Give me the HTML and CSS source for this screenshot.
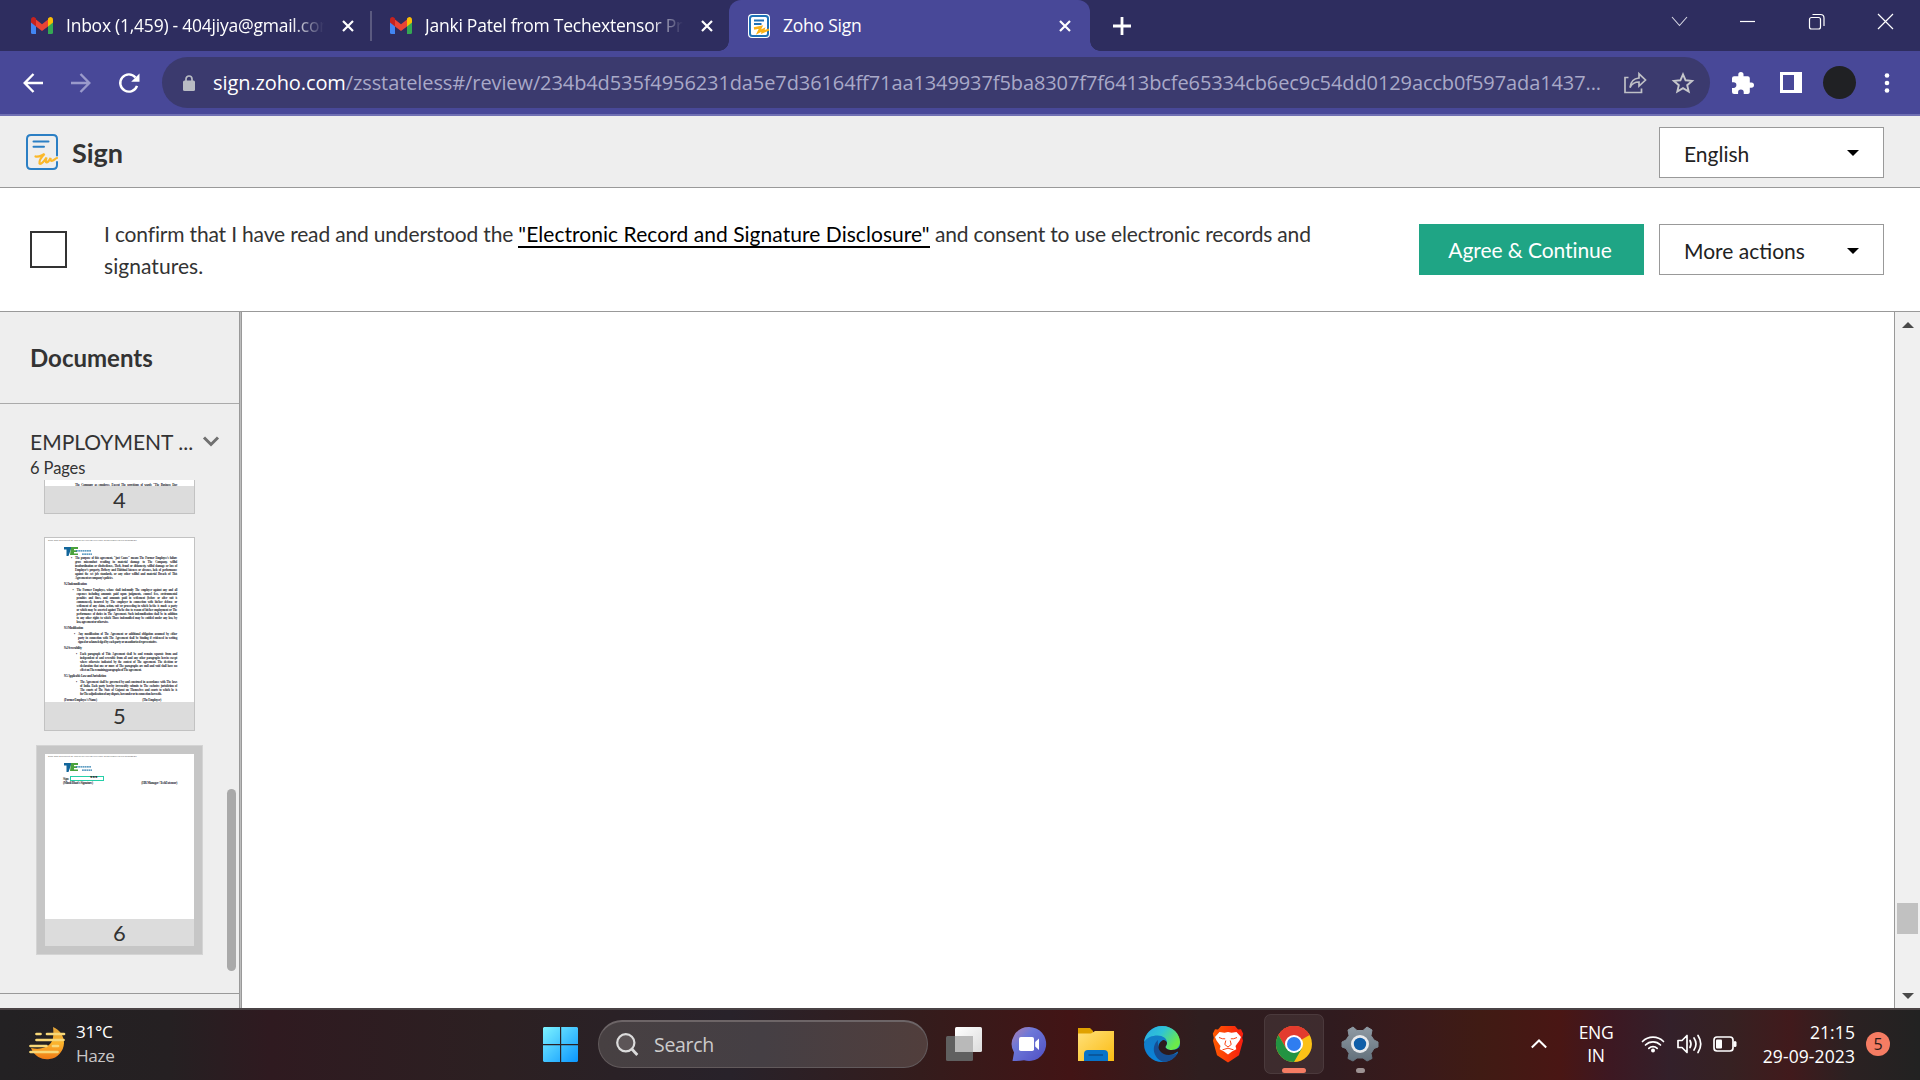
FILE: index.html
```html
<!DOCTYPE html>
<html lang="en">
<head>
<meta charset="utf-8">
<title>Zoho Sign</title>
<link rel="stylesheet" href="styles.css">
</head>
<body>
<svg class="defs" width="0" height="0">
  <defs>
    <linearGradient id="win" x1="0" y1="0" x2="1" y2="1"><stop offset="0" stop-color="#7df3ff"/><stop offset="1" stop-color="#0a96ff"/></linearGradient>
    <linearGradient id="haze" x1="0" y1="0" x2="0" y2="1"><stop offset="0" stop-color="#e0a23a"/><stop offset=".5" stop-color="#fcb42c"/><stop offset="1" stop-color="#ef7a16"/></linearGradient>
    <linearGradient id="chat" x1="0" y1="0" x2="1" y2="1"><stop offset="0" stop-color="#b27fae"/><stop offset=".35" stop-color="#6d78d8"/><stop offset="1" stop-color="#4f4fc4"/></linearGradient>
    <linearGradient id="folder" x1="0" y1="0" x2="1" y2="1"><stop offset="0" stop-color="#ffe07a"/><stop offset="1" stop-color="#fbbc12"/></linearGradient>
    <linearGradient id="edgeTop" x1="0" y1="0" x2="1" y2=".5"><stop offset="0" stop-color="#2aa7e6"/><stop offset=".5" stop-color="#2fc3d6"/><stop offset="1" stop-color="#6bea4a"/></linearGradient>
    <linearGradient id="edgeMid" x1="0" y1="0" x2="0" y2="1"><stop offset="0" stop-color="#1679bd"/><stop offset="1" stop-color="#0a84dc"/></linearGradient>
    <linearGradient id="brave" x1="0" y1="0" x2="1" y2="0"><stop offset="0" stop-color="#ff5a00"/><stop offset="1" stop-color="#f71d10"/></linearGradient>
    <linearGradient id="gear" x1="0" y1="0" x2="0" y2="1"><stop offset="0" stop-color="#8f9aa3"/><stop offset="1" stop-color="#63717c"/></linearGradient>
    <linearGradient id="page" x1="0" y1="0" x2="1" y2="1"><stop offset="0" stop-color="#fff"/><stop offset="1" stop-color="#dcdcdc"/></linearGradient>
    <symbol id="gmail" viewBox="0 0 22 17" preserveAspectRatio="none">
      <path d="M0 4v11.500Q0 17 1.500 17H5V7z" fill="#4285f4"/>
      <path d="M17 7v10h3.500Q22 17 22 15.500V4z" fill="#34a853"/>
      <path d="M5 2.500 11 7.300l6-4.800V9.500L11 14 5 9.500z" fill="#ea4335"/>
      <path d="M0 2.800C0 .2 2.600-.6 4.200.8L5 1.500v8L0 5.500z" fill="#c5221f"/>
      <path d="M22 2.800c0-2.600-2.600-3.400-4.200-2L17 1.500v8l5-4z" fill="#fbbc04"/>
    </symbol>
    <symbol id="close" viewBox="0 0 12 12"><path d="M1 1l10 10M11 1 1 11" stroke="#fff" stroke-width="2.200"/></symbol>
    <symbol id="tri" viewBox="0 0 12 6"><path d="M0 0h12L6 6z"/></symbol>
  </defs>
</svg>
<div class="screen">
  <div class="tabstrip">
    <div class="tab tab-one">
      <svg class="favicon" width="22" height="17"><use href="#gmail" width="22" height="17"/></svg>
      <span class="tab-title title-one">Inbox (1,459) - 404jiya@gmail.com</span>
      <svg class="tab-close" width="12" height="12"><use href="#close"/></svg>
    </div>
    <div class="tab-sep"></div>
    <div class="tab tab-two">
      <svg class="favicon" width="22" height="17"><use href="#gmail" width="22" height="17"/></svg>
      <span class="tab-title title-two">Janki Patel from Techextensor Priv</span>
      <svg class="tab-close" width="12" height="12"><use href="#close"/></svg>
    </div>
    <div class="tab tab-active">
      <svg class="favicon" width="22" height="24" viewBox="0 0 22 24">
        <rect width="22" height="24" rx="4" fill="#fff"/>
        <rect x="2" y="2" width="18" height="20" rx="2.500" fill="#fff" stroke="#1f72b8" stroke-width="2"/>
        <path d="M6 6.500h10M6 10h7.500" stroke="#1f72b8" stroke-width="2"/>
        <path d="M6 14.500l7-1.500-2.500 5 5-2.500-.8 2.500 6.300-2.500" fill="none" stroke="#fbb116" stroke-width="2.400"/>
      </svg>
      <span class="tab-title title-three">Zoho Sign</span>
      <svg class="tab-close" width="12" height="12"><use href="#close"/></svg>
    </div>
    <svg class="new-tab" width="18" height="18"><path d="M9 0v18M0 9h18" stroke="#fff" stroke-width="2.800"/></svg>
    <svg class="win-controls" width="220" height="18" fill="none" stroke="#fff" stroke-width="1.200">
      <path d="M2 4l7.500 8.500L17 4" stroke-width="1.100" stroke="#d8d8e4"/><path d="M70 8.500h15"/>
      <rect x="139.500" y="4.500" width="11" height="11.500" rx="2"/><path d="M142.500 1.500h8q3.500 0 3.500 3.500v8"/>
      <path d="M208 1l15 15M223 1l-15 15"/>
    </svg>
  </div>

  <div class="toolbar">
    <svg class="nav-icons" width="118" height="22" fill="none" stroke="#fff" stroke-width="2.400">
      <path d="M20 11H2M10.500 2 1.700 11l8.800 9"/>
      <path d="M48 11h18M57.500 2l8.800 9-8.800 9" stroke="#9a9acb"/>
      <path d="M112.500 5.500A8.600 8.600 0 1 0 114 13.800"/><path d="M116.500 1.500v8.300h-8.300z" fill="#fff" stroke="none"/>
    </svg>
    <div class="omnibox">
      <svg class="lock" width="12" height="16" viewBox="0 0 12 16"><rect y="5.500" width="12" height="10.500" rx="1.500" fill="#b9bcc4"/><path d="M3 6V4a3 3 0 0 1 6 0v2" fill="none" stroke="#b9bcc4" stroke-width="1.700"/></svg>
      <span class="url"><b>sign.zoho.com</b>/zsstateless#/review/234b4d535f4956231da5e7d36164ff71aa1349937f5ba8307f7f6413bcfe65334cb6ec9c54dd0129accb0f597ada1437...</span>
      <svg class="share" width="23" height="22" viewBox="0 0 23 22" fill="none" stroke="#bfc0c6" stroke-width="1.700"><path d="M4.500 5.500H1v15h16.500v-4"/><path d="M6 15.500C6.500 10 10 6.500 15 6V1.800L21.500 8 15 14v-4c-4 0-7 1.500-9 5.500z"/></svg>
      <svg class="star" width="22" height="21" viewBox="0 0 22 21" fill="none" stroke="#c6c7cc" stroke-width="1.900"><path d="M11 2.300l2.600 6 6.500.6-4.900 4.300 1.500 6.400L11 16.200l-5.700 3.400 1.500-6.400L1.900 8.900l6.500-.6z"/></svg>
    </div>
    <svg class="puzzle" width="22" height="22" viewBox="2 1 21 21"><path fill="#fff" d="M20.500 11H19V7a2 2 0 0 0-2-2h-4V3.500a2.500 2.500 0 0 0-5 0V5H4a2 2 0 0 0-2 2v3.800h1.500a2.700 2.700 0 0 1 0 5.400H2V20a2 2 0 0 0 2 2h3.800v-1.500a2.700 2.700 0 0 1 5.400 0V22H17a2 2 0 0 0 2-2v-4h1.500a2.500 2.500 0 0 0 0-5z"/></svg>
    <svg class="panel" width="22" height="21"><path fill="#fff" fill-rule="evenodd" d="M0 0h22v21H0zM3 3v15h11V3z"/></svg>
    <div class="avatar"></div>
    <svg class="dots" width="6" height="20" fill="#fff"><circle cx="3" cy="2.500" r="2.300"/><circle cx="3" cy="10" r="2.300"/><circle cx="3" cy="17.500" r="2.300"/></svg>
  </div>

  <header class="app-header">
    <svg class="app-logo" width="33" height="37" viewBox="0 0 33 37" fill="none" stroke-linecap="round">
      <path d="M31 21.500V5q0-4-4-4H5Q1 1 1 5v26q0 4 4 4h22q4 0 4-4v-3" stroke="#2b7fc4" stroke-width="2"/>
      <path d="M7.500 7.500h15M7.500 12.700h10.500" stroke="#2b7fc4" stroke-width="2"/>
      <path d="M9.500 22.500c3 1 6.500-1.500 9-2.500-3 3-5.500 7-5 9.500 1.500 1.500 5-3 7-6-.5 2.500-1.500 4.500 0 4.800 1.800.2 3.200-2.800 4-4.300 0 2 .2 3.200 1.800 2.800 2-.6 3-2.500 4.700-2.800" stroke="#fbb829" stroke-width="2.200"/>
    </svg>
    <span class="app-name">Sign</span>
    <div class="select language"><span>English</span><svg width="12" height="6"><use href="#tri"/></svg></div>
  </header>

  <section class="consent">
    <div class="checkbox"></div>
    <p class="consent-text">I confirm that I have read and understood the <a>"Electronic Record and Signature Disclosure"</a> and consent to use electronic records and <span class="last-word">signatures.</span></p>
    <div class="agree">Agree &amp; Continue</div>
    <div class="select actions"><span>More actions</span><svg width="12" height="6"><use href="#tri"/></svg></div>
  </section>

  <main class="workspace">
    <aside class="sidebar">
      <h2 class="side-title">Documents</h2>
      <div class="doc-list">
        <div class="doc-head">
          <span class="doc-name">EMPLOYMENT ...</span>
          <svg width="16" height="11" fill="none" stroke="#707070" stroke-width="3"><path d="M1 1.500l7 7 7-7"/></svg>
        </div>
        <div class="doc-pages">6 Pages</div>
        <div class="thumb thumb-cut"><div class="sheet"><div class="ln cut-line">The Company as employee. Except The provisions of wards "The Business Day</div></div><div class="num">4</div></div>
        <div class="thumb thumb-five">
          <div class="sheet">
            <div class="doc-id">Zoho Sign Document ID: 5TPTKTFHFUVEIXKLVJJMAD6SKMS7TVO4KPIOIGRBLSF</div>
            <svg class="brand" width="28" height="9" viewBox="0 0 28 9"><path d="M0 0h7v2L4.500 9H2.500V2.500H0z" fill="#12669b"/><path d="M7 0h7v2h-4v1.300h3v1.600h-3v1.500h4V8H6z" fill="#4aa23c"/><path d="M12 3.800h15M18 7.200h10" stroke="#2d7fb0" stroke-width="1.200" stroke-dasharray="1.800 .4"/></svg>
            <div class="doc-body">
              <div class="para p-one"><div class="ln">The purpose of this agreement, "just Cause" means The Former Employee's failure</div><div class="ln">gross misconduct resulting in material damage to The Company, willful</div><div class="ln">insubordination or disobedience, Theft, fraud or dishonesty, willful damage or loss of</div><div class="ln">Employer's property, Bribery and Habitual lateness or absence, lack of performance</div><div class="ln">against the set job standards, or any other willful and material Breach of This</div><div class="ln end">Agreement or company's policies.</div></div>
              <div class="head">9.2 Indemnification</div>
              <div class="para p-two"><div class="ln">The Former Employee, whose shall indemnify The employer against any and all</div><div class="ln">expenses including amounts paid upon judgments, counsel fees, environmental</div><div class="ln">penalties and fines, and amounts paid in settlement (before or after suit is</div><div class="ln">commenced), incurred by The employer in connection with his/her defense or</div><div class="ln">settlement of any claim, action, suit or proceeding in which he/she is made a party</div><div class="ln">or which may be asserted against The/he due to reason of his/her employment or The</div><div class="ln">performance of duties in The Agreement. Such indemnification shall be in addition</div><div class="ln">to any other rights to which Those indemnified may be entitled under any law, by</div><div class="ln end">law, agreement or otherwise.</div></div>
              <div class="head">9.3 Modification</div>
              <div class="para p-three"><div class="ln">Any modification of The Agreement or additional obligation assumed by either</div><div class="ln">party in connection with The Agreement shall be binding if evidenced in writing</div><div class="ln end">signed or acknowledged by each party or an authorized representative.</div></div>
              <div class="head">9.4 Severability</div>
              <div class="para p-four"><div class="ln">Each paragraph of This Agreement shall be and remain separate from and</div><div class="ln">independent of and severable from all and any other paragraphs herein except</div><div class="ln">where otherwise indicated by the context of The agreement. The decision or</div><div class="ln">declaration that one or more of The paragraphs are null and void shall have no</div><div class="ln end">effect on The remaining paragraphs of The agreement.</div></div>
              <div class="head">9.5 Applicable Law and Jurisdiction</div>
              <div class="para p-four"><div class="ln">The Agreement shall be governed by and construed in accordance with The laws</div><div class="ln">of India. Each party hereby irrevocably submits to The exclusive jurisdiction of</div><div class="ln">The courts of The State of Gujarat on Themselves and courts to which he is</div><div class="ln end">for The adjudication of any dispute, hereunder or in connection herewith.</div></div>
              <div class="signers"><span>(Former Employee's Name)</span><span class="signer-two">(The Employer)</span></div>
            </div>
          </div>
          <div class="num">5</div>
        </div>
        <div class="thumb-selected">
          <div class="sheet">
            <div class="doc-id">Zoho Sign Document ID: 5TPTKTFHFUVEIXKLVJJMAD6SKMS7TVO4KPIOIGRBLSF</div>
            <svg class="brand" width="28" height="9" viewBox="0 0 28 9"><path d="M0 0h7v2L4.500 9H2.500V2.500H0z" fill="#12669b"/><path d="M7 0h7v2h-4v1.300h3v1.600h-3v1.500h4V8H6z" fill="#4aa23c"/><path d="M12 3.800h15M18 7.200h10" stroke="#2d7fb0" stroke-width="1.200" stroke-dasharray="1.800 .4"/></svg>
            <div class="sign-row"><span>Sign:</span><i class="sign-field">■■■</i></div>
            <div class="signers"><span>(Mindi Bhatt's Signature)</span><span>(HR Manager / TechExtensor)</span></div>
          </div>
          <div class="num">6</div>
        </div>
        <div class="side-thumb"></div>
      </div>
    </aside>
    <div class="canvas"></div>
    <div class="scrollbar">
      <svg width="12" height="6" class="up"><use href="#tri"/></svg>
      <div class="scroll-thumb"></div>
      <svg width="12" height="6" class="down"><use href="#tri"/></svg>
    </div>
  </main>

  <footer class="taskbar">
    <svg class="weather" width="36" height="35" viewBox="0 0 36 35">
      <path d="M24 1c7 3 11 9 11 16a17 17 0 0 1-33 5c9 2 20 0 22-10 .6-4 .4-8 0-11z" fill="url(#haze)"/>
      <path d="M7.500 8h4M18 8h17M7.500 14h27M1.500 20h16M24 20h5M1.500 26h27" stroke="#f8d878" stroke-width="2.700" stroke-linecap="round"/>
    </svg>
    <div class="weather-text"><span>31°C</span><span class="dim">Haze</span></div>
    <svg class="start" width="35" height="35"><path fill="url(#win)" d="M1 0h16v17H0V1zM18.200 0H34l1 1v16H18.200zM0 18.200h17V35H1l-1-1zM18.200 18.200H35V34l-1 1H18.200z"/></svg>
    <div class="search">
      <svg width="22" height="23" fill="none" stroke="#dcdcdc" stroke-width="2.200"><circle cx="9.800" cy="9.800" r="8.600" fill="#5c5557"/><path d="M15.800 16l5.500 6" stroke-width="2.800"/></svg>
      <span>Search</span>
    </div>
    <svg class="apps" width="440" height="66" viewBox="940 1012 440 66">
      <rect x="946" y="1036" width="27" height="25" rx="1.500" fill="#606060"/>
      <rect x="955" y="1027" width="27" height="25" rx="1.500" fill="url(#page)"/>
      <path d="M955 1036h18v16h-18z" fill="#b9b9b9"/>
      <path d="M1029 1027a17 17 0 1 1-5 33.200q-5 1-11.500 .8l1.500-8.500a17 17 0 0 1 15-25.500z" fill="url(#chat)"/>
      <rect x="1019" y="1037" width="15" height="14" rx="1.800" fill="#fff"/><path d="M1035.200 1042l3.800-3.500v11.500l-3.800-3.500z" fill="#fff"/>
      <path d="M1078 1028h12l3 3v5h-15z" fill="#e0a100"/><path d="M1078 1033.500h13l4-2.500h19v30h-36z" fill="url(#folder)"/>
      <path d="M1084 1061v-7q0-4 4-4h16q4 0 4 4v7z" fill="#0873c8"/><path d="M1088.500 1055h14.500" stroke="#0a4f90" stroke-width="1.500"/>
      <circle cx="1162" cy="1044" r="18" fill="url(#edgeMid)"/>
      <path d="M1144 1042c1-9 9-16 18-16 11 0 18 8 18 16 0 5-4 8-8.500 8-3.500 0-6-1.500-6-3 0-1 1.500-2 1.500-4.500 0-4-4-7-9.500-7-5.500 0-10.500 2-13.500 6.500z" fill="url(#edgeTop)"/>
      <path d="M1158 1040c-7 6-5 18 5 21.800 6 .5 12-3 15-9-4 2-8 2.500-12 1-6-2-9-8-8-13.800z" fill="#164e94"/>
      <path d="M1163 1040c-4 2-6 7-3 11 4 5 12 5 17 1 1.500-1 2 .5 1 2 1-2 2-5 2-8-1.500 2.500-4 4-8.500 4-3.500 0-6-1.500-6-3 0-1 1.500-2 1.500-4 0-1.500-1.500-3-4-3z" fill="#2d1a1e"/>
      <path d="M1221 1026h14l3 3.500 3-.2 2.200 4.500-1 4 .8 3-4 14.500-11 7.200-11-7.200-4-14.500.8-3-1-4 2.200-4.500 3 .2z" fill="url(#brave)"/>
      <path d="M1219.500 1032l5 .7 3.500-.7 3.500.7 5-.7 4.500 5-1.500 3.500-4 5.500.8 3.200-4.300 2.200-4 3-4-3-4.300-2.200.8-3.200-4-5.500-1.500-3.500z" fill="#fff"/>
      <path d="M1219 1037.500q3.500 1.800 6.200 1.300M1237 1037.500q-3.500 1.800-6.200 1.300M1225.800 1040.500l-1 4 3.200 2.500 3.200-2.500-1-4M1222.500 1049.800l5.500-1.600 5.500 1.600" fill="none" stroke="#fa4314" stroke-width="1"/>
      <rect x="1264.500" y="1014.500" width="59" height="59" rx="6" fill="#fff" fill-opacity=".07" stroke="#fff" stroke-opacity=".1"/>
      <circle cx="1294" cy="1044" r="18" fill="#fbc116"/>
      <path d="M1294 1044 1278.400 1035A18 18 0 0 1 1309.600 1035z" fill="#e33b2e"/>
      <path d="M1294 1035h15.600A18 18 0 0 0 1278.400 1035l7.800 13.500z" fill="#e33b2e"/>
      <path d="M1278.400 1035A18 18 0 0 0 1294 1062l7.800-13.500-7.800 4.500-7.800-4.500z" fill="#229342"/>
      <circle cx="1294" cy="1044" r="9" fill="#fff"/><circle cx="1294" cy="1044" r="7" fill="#2f7df0"/>
      <rect x="1282" y="1068" width="24" height="5" rx="2.500" fill="#f57c63"/>
      <path d="M1353 1027l4 3.500h6l4-3.500 5 3-1 5.500 3 4.500 4 2v5l-4 1.500-3 5 1 5-5 2.500-4-3h-6l-4 3-5-2.500 1-5-3-5-4-1.500v-5l4-2 3-4.500-1-5.500z" fill="url(#gear)" stroke="url(#gear)" stroke-linejoin="round"/>
      <circle cx="1360" cy="1044" r="9" fill="#e9eaec"/><circle cx="1360" cy="1044" r="6.200" fill="#0f5ea8"/>
      <rect x="1356" y="1068" width="9" height="5" rx="2.500" fill="#9d9293"/>
    </svg>
    <svg class="caret" width="16" height="10" fill="none" stroke="#fff" stroke-width="2"><path d="M.8 8.500 8 1.500l7.200 7"/></svg>
    <div class="lang"><span>ENG</span><span>IN</span></div>
    <svg class="tray" width="98" height="22" fill="none" stroke="#fff" stroke-width="1.700" stroke-linecap="round">
      <path d="M1.500 8.500a15 15 0 0 1 21 0M4.500 12a10.600 10.600 0 0 1 15 0M7.800 15.300a6 6 0 0 1 8.400 0"/><circle cx="12" cy="17.500" r="2" fill="#fff" stroke="none"/>
      <path d="M37 7.500h4l5-5v17l-5-5h-4z" stroke-linejoin="round"/><path d="M49 7.500q2 3.500 0 7M53 5q4 6 0 12M57 2.500q5.500 8.500 0 17"/>
      <rect x="73" y="4" width="19" height="14" rx="3"/><rect x="75" y="6.500" width="6" height="9" rx="1" fill="#fff" stroke="none"/><path d="M94 9.500v3" stroke-width="3"/>
    </svg>
    <div class="clock"><span>21:15</span><span>29-09-2023</span></div>
    <div class="badge">5</div>
  </footer>
</div>
</body>
</html>
```
FILE: styles.css
```css
* { box-sizing: border-box; }
body { margin: 0; font-family: Lato, sans-serif; color: #333; overflow: hidden; }
svg { display: block; flex: none; overflow: visible; }
.defs { position: absolute; }
.screen { width: 1920px; height: 1080px; display: flex; flex-direction: column; background: #fff; }

/* browser chrome */
.tabstrip { height: 51px; background: #2e2d5f; display: flex; align-items: center; font-family: "Open Sans", "Noto Sans", sans-serif; font-size: 17.5px; color: #fff; flex: none; }
.tab { height: 51px; display: flex; align-items: center; flex: none; }
.tab-one { width: 370px; padding-left: 31px; }
.tab-two { width: 357px; padding-left: 18px; }
.tab-sep { width: 2px; height: 30px; background: #5b5a80; }
.tab-active { width: 361px; padding-left: 19px; background: #484898; border-radius: 12px 12px 0 0; position: relative; }
.tab-active::before, .tab-active::after { content: ""; position: absolute; bottom: 0; width: 10px; height: 10px; }
.tab-active::before { left: -10px; background: radial-gradient(circle at 0 0, transparent 9.5px, #484898 10px); }
.tab-active::after { right: -10px; background: radial-gradient(circle at 100% 0, transparent 9.5px, #484898 10px); }
.tab-title { margin-left: 13px; padding-bottom: 1px; width: 258px; white-space: nowrap; overflow: hidden; letter-spacing: -0.24px; }
.title-one, .title-two { -webkit-mask-image: linear-gradient(90deg, #000 225px, transparent 258px); mask-image: linear-gradient(90deg, #000 225px, transparent 258px); }
.title-three { width: 276px; }
.tab-close { margin-left: 18px; }
.title-three + .tab-close { margin-left: 0; }
.new-tab { margin-left: 23px; }
.win-controls { margin-left: 539px; margin-bottom: 7px; }
.toolbar { height: 65px; background: #484898; border-bottom: 2px solid #7070b3; display: flex; align-items: center; padding-left: 23px; flex: none; }
.omnibox { margin-left: 21px; width: 1548px; height: 51px; border-radius: 26px; background: #3b3a6e; display: flex; align-items: center; padding-left: 21px; }
.url { margin-left: 18px; width: 1411px; font-family: "Open Sans", "Noto Sans", sans-serif; font-size: 20px; letter-spacing: -0.1px; color: #a9a9c8; white-space: nowrap; }
.url b { font-weight: 400; color: #fff; }
.star { margin-left: 25px; }
.puzzle { margin-left: 22px; }
.panel { margin-left: 26px; }
.avatar { margin-left: 21px; width: 33px; height: 33px; border-radius: 50%; background: #202124; }
.dots { margin-left: 28px; }

/* application header */
.app-header { height: 72px; background: #eee; border-bottom: 1px solid #999; display: flex; align-items: flex-start; padding: 11px 36px 0 26px; flex: none; }
.app-logo { margin-top: 7px; }
.app-name { margin: 8px 0 0 13px; font-size: 27px; line-height: 36px; font-weight: 700; color: #333; }
.select { width: 225px; height: 51px; border: 1px solid #999; background: #fff; display: flex; align-items: center; justify-content: space-between; padding: 1px 24px 0 24px; font-size: 21px; color: #222; flex: none; }
.select svg { margin-top: -1px; }
.language { margin-left: auto; }
.actions svg { margin-top: 1px; }
.consent { height: 124px; border-bottom: 1px solid #999; display: flex; padding: 36px 36px 0 30px; flex: none; }
.checkbox { width: 37px; height: 37px; margin-top: 7px; border: 2px solid #333; flex: none; }
.consent-text { margin: -6px 0 0 37px; width: 1240px; font-size: 21px; line-height: 32px; letter-spacing: -0.17px; }
.consent-text a { color: #000; border-bottom: 2px solid #000; letter-spacing: 0.05px; }
.last-word { letter-spacing: 0.05px; }
.agree { margin: 0 15px 0 auto; padding-right: 3px; width: 225px; height: 51px; background: #1fa585; color: #fff; font-size: 21px; letter-spacing: -0.08px; line-height: 52px; text-align: center; flex: none; }

/* document sidebar */
.workspace { height: 696px; display: flex; flex: none; }
.sidebar { width: 240px; background: #eee; border-right: 1px solid #999; flex: none; }
.side-title { margin: 0; height: 92px; border-bottom: 1px solid #aaa; padding-left: 30px; font-size: 24px; line-height: 92px; font-weight: 700; }
.doc-list { height: 590px; position: relative; border-bottom: 1px solid #999; padding-top: 21px; }
.doc-head { display: flex; align-items: center; justify-content: space-between; height: 34px; padding: 0 20px 2px 30px; font-size: 21px; color: #333; }
.doc-head svg { margin-top: 1px; }
.doc-pages { padding-left: 30px; height: 21px; font-size: 16.5px; line-height: 18px; letter-spacing: -0.1px; }
.thumb { margin-left: 44px; width: 151px; border: 1px solid #c2c2c2; display: flex; flex-direction: column; }
.thumb-cut { height: 34px; border-top: 0; overflow: hidden; }
.thumb-five { height: 194px; margin-top: 23px; }
.sheet { flex: 1; background: #fff; overflow: hidden; font-family: "Liberation Serif", serif; font-size: 3.3px; letter-spacing: -0.3px; line-height: 4px; color: #2a2a33; font-weight: 700; }
.num { height: 27px; background: #dcdcdc; text-align: center; font-size: 22px; line-height: 27px; color: #333; flex: none; }
.thumb-five .num { height: 28px; }
.ln { height: 4px; white-space: nowrap; text-align-last: justify; }
.ln.end { text-align-last: left; }
.cut-line { margin: 3px 17px 0 30px; }
.doc-id { padding: 1px 0 0 3px; height: 9px; font-family: "Liberation Sans", sans-serif; font-weight: 400; font-size: 2.35px; letter-spacing: 0; line-height: 3px; color: #666; white-space: nowrap; }
.brand { margin-left: 19px; }
.doc-body { display: flex; flex-direction: column; gap: 2px; padding: 0 17px 0 19px; }
.para { position: relative; }
.para::before { content: "•"; position: absolute; left: -4px; top: 0; }
.p-one { margin-left: 11px; }
.p-two { margin-left: 12.5px; }
.p-three { margin-left: 14px; }
.p-four { margin-left: 16px; }
.head, .signers { height: 4px; white-space: nowrap; font-size: 3.4px; }
.signers { display: flex; }
.signer-two { margin-left: auto; margin-right: 16px; }
.thumb-selected { margin: 14px 0 0 36px; width: 167px; height: 210px; padding: 8px; background: #c6c6c6; border: 1px solid #d4d4d4; display: flex; flex-direction: column; }
.sign-row { display: flex; align-items: center; margin: 4px 0 0 18px; height: 5px; color: #333; }
.sign-field { margin-left: 1px; width: 34px; height: 5px; border: 1px solid #25cfa8; font-style: normal; font-size: 3.5px; line-height: 1px; text-align: right; padding-right: 5px; letter-spacing: 0.4px; }
.thumb-selected .signers { padding: 0 17px 0 18px; justify-content: space-between; }
.side-thumb { position: absolute; left: 227px; top: 385px; width: 9px; height: 182px; border-radius: 5px; background: #a9a9a9; }
.canvas { flex: 1; background: #fff; box-shadow: inset 1px 0 #bdbdbd, inset 2px 0 #999; }
.scrollbar { width: 26px; border-left: 1px solid #999; background: #f0f0f0; display: flex; flex-direction: column; align-items: center; padding: 10px 0 9px; fill: #4a4a4a; }
.up { transform: rotate(180deg); }
.scroll-thumb { width: 21px; height: 31px; margin-top: 575px; background: #c1c1c1; }
.down { margin-top: auto; }

/* desktop taskbar */
.taskbar { height: 72px; border-top: 2px solid #4a4345; display: flex; align-items: flex-start; color: #fff; font-family: "Open Sans", "Noto Sans", sans-serif; font-size: 17px; background: linear-gradient(90deg, #232123 0, #252022 170px, #2f1a20 270px, #2c2022 500px, #28222a 730px, #341c1c 920px, #421415 1070px, #2f1e1f 1200px, #301b1f 1330px, #3a1a1a 1420px, #401b14 1480px, #491614 1560px, #3d1822 1610px, #33202a 1670px, #362122 1730px, #411a1c 1790px, #2b2122 1850px, #222 1920px); }
.weather { margin: 16px 0 0 29px; }
.weather-text, .lang, .clock { display: flex; flex-direction: column; line-height: 24px; margin-top: 10px; flex: none; }
.weather-text { width: 61px; margin-left: 11px; letter-spacing: -0.35px; font-size: 17.2px; }
.dim { color: #c8c6c7; }
.start { margin: 17px 0 0 406px; }
.search { margin: 10px 0 0 20px; width: 330px; height: 48px; border-radius: 24px; border: 1px solid #625a5c; border-top: 2px solid #6d6567; background: linear-gradient(90deg, #474042, #453f44 50%, #513e3c); display: flex; align-items: center; padding-left: 17px; font-size: 19.5px; color: #ccc; flex: none; }
.search span { margin-left: 16px; letter-spacing: -0.3px; }
.apps { margin: 2px 0 0 12px; }
.caret { margin: 29px 0 0 151px; }
.lang { width: 60px; margin-left: 19px; text-align: center; line-height: 23px; margin-top: 11px; font-size: 17.5px; letter-spacing: -0.3px; }
.tray { margin: 23px 0 0 15px; }
.clock { width: 100px; margin-left: 16px; text-align: right; font-size: 17.5px; letter-spacing: 0.1px; }
.badge { margin: 22px 0 0 11px; width: 24px; height: 24px; border-radius: 50%; background: #f57c63; color: #2a1a18; text-align: center; font-size: 16px; line-height: 24px; }
```
